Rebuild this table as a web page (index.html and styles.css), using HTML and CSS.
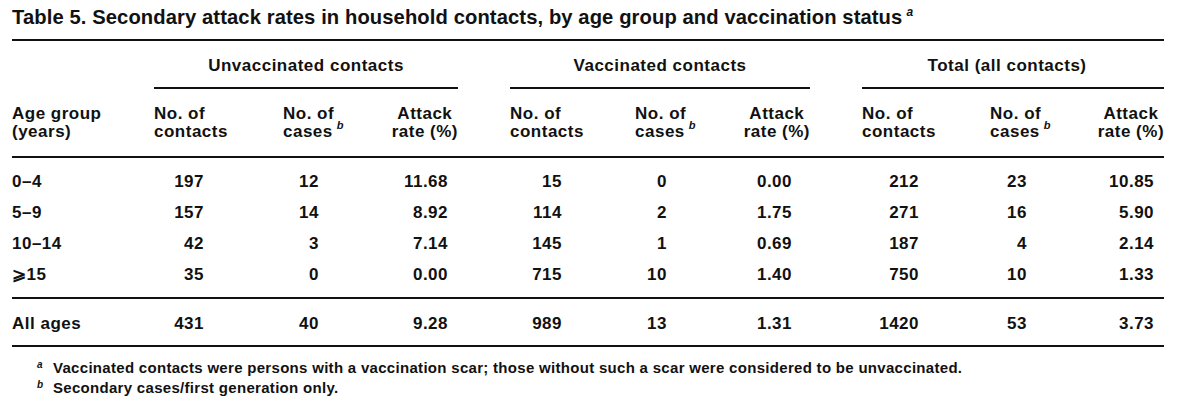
FILE: index.html
```html
<!DOCTYPE html>
<html lang="en">
<head>
<meta charset="utf-8">
<title>Table 5</title>
<link rel="stylesheet" href="styles.css">
</head>
<body>
<div class="page">
  <h1 class="title">Table 5. Secondary attack rates in household contacts, by age group and vaccination status<sup class="sup">a</sup></h1>
  <table class="tbl">
    <colgroup>
      <col class="w-age">
      <col class="w-c1"><col class="w-c2a"><col class="w-c3">
      <col class="w-gap">
      <col class="w-c1"><col class="w-c2b"><col class="w-c3">
      <col class="w-gap">
      <col class="w-c1"><col class="w-c2c"><col class="w-c3">
    </colgroup>
    <thead>
      <tr class="grp-row">
        <th></th>
        <th colspan="3" class="grp">Unvaccinated contacts</th>
        <th></th>
        <th colspan="3" class="grp">Vaccinated contacts</th>
        <th></th>
        <th colspan="3" class="grp grp-total">Total (all contacts)</th>
      </tr>
      <tr class="hdr-row">
        <th class="h-age">Age group<br>(years)</th>
        <th class="h-con">No. of<br>contacts</th>
        <th class="h-cas">No. of<br>cases<sup class="sup-s">b</sup></th>
        <th class="h-rate"><span class="stack">Attack<br>rate (%)</span></th>
        <th></th>
        <th class="h-con">No. of<br>contacts</th>
        <th class="h-cas">No. of<br>cases<sup class="sup-s">b</sup></th>
        <th class="h-rate"><span class="stack">Attack<br>rate (%)</span></th>
        <th></th>
        <th class="h-con">No. of<br>contacts</th>
        <th class="h-cas">No. of<br>cases<sup class="sup-s">b</sup></th>
        <th class="h-rate"><span class="stack">Attack<br>rate (%)</span></th>
      </tr>
    </thead>
    <tbody>
      <tr class="first">
        <td>0–4</td><td>197</td><td>12</td><td>11.68</td><td></td><td>15</td><td>0</td><td>0.00</td><td></td><td>212</td><td>23</td><td>10.85</td>
      </tr>
      <tr>
        <td>5–9</td><td>157</td><td>14</td><td>8.92</td><td></td><td>114</td><td>2</td><td>1.75</td><td></td><td>271</td><td>16</td><td>5.90</td>
      </tr>
      <tr>
        <td>10–14</td><td>42</td><td>3</td><td>7.14</td><td></td><td>145</td><td>1</td><td>0.69</td><td></td><td>187</td><td>4</td><td>2.14</td>
      </tr>
      <tr class="last">
        <td>⩾15</td><td>35</td><td>0</td><td>0.00</td><td></td><td>715</td><td>10</td><td>1.40</td><td></td><td>750</td><td>10</td><td>1.33</td>
      </tr>
    </tbody>
    <tfoot>
      <tr class="total">
        <td>All ages</td><td>431</td><td>40</td><td>9.28</td><td></td><td>989</td><td>13</td><td>1.31</td><td></td><td>1420</td><td>53</td><td>3.73</td>
      </tr>
    </tfoot>
  </table>
  <div class="notes">
    <p class="note"><sup class="mark">a</sup>Vaccinated contacts were persons with a vaccination scar; those without such a scar were considered to be unvaccinated.</p>
    <p class="note"><sup class="mark">b</sup>Secondary cases/first generation only.</p>
  </div>
</div>
</body>
</html>
```

FILE: styles.css
```css
html, body {
  margin: 0;
  padding: 0;
  background: #ffffff;
}

body {
  font-family: "Liberation Sans", Arial, sans-serif;
  color: #111111;
}

.page {
  width: 1152px;
  padding-left: 12px;
}

.title {
  margin: 0;
  padding-top: 5px;
  margin-bottom: 10px;
  font-size: 20.2px;
  line-height: 24px;
  font-weight: 700;
  letter-spacing: 0.1px;
}

.sup {
  font-size: 12px;
  font-style: italic;
  vertical-align: 8px;
  line-height: 0;
  margin-left: 4px;
}

.tbl {
  width: 1152px;
  table-layout: fixed;
  border-collapse: separate;
  border-spacing: 0;
  border-top: 2px solid #111111;
  font-size: 17px;
  font-weight: 700;
  letter-spacing: 0.5px;
}

.w-age { width: 142px; }
.w-c1 { width: 90px; }
.w-c2a { width: 132px; }
.w-c2b { width: 128px; }
.w-c2c { width: 130px; }
.w-c3 { width: 82px; }
.w-gap { width: 52px; }

.tbl th {
  font-weight: 700;
  padding: 0;
  line-height: 18px;
  vertical-align: top;
  white-space: nowrap;
}

.grp-row th {
  padding-top: 16px;
  padding-bottom: 12px;
}

.grp {
  text-align: center;
  border-bottom: 2px solid #111111;
}

.grp-row th.grp-total {
  padding-right: 12px;
}

.hdr-row th {
  padding-top: 16px;
  padding-bottom: 15px;
  border-bottom: 2px solid #111111;
  text-align: left;
}

.h-age { padding-left: 0; }
.h-con { padding-left: 2px; }
.hdr-row th:nth-child(3) { padding-left: 39px; }
.hdr-row th:nth-child(7) { padding-left: 35px; }
.hdr-row th:nth-child(11) { padding-left: 38px; }
.hdr-row th.h-rate { text-align: right; }

.stack {
  display: inline-block;
  text-align: center;
}

.sup-s {
  font-size: 11px;
  font-style: italic;
  vertical-align: 8px;
  line-height: 0;
  margin-left: 4px;
}

.tbl td {
  padding: 0;
  line-height: 31px;
  text-align: right;
  white-space: nowrap;
}

.tbl td:first-child { text-align: left; }

.tbl td:nth-child(2) { padding-right: 40px; }
.tbl td:nth-child(3) { padding-right: 57px; }
.tbl td:nth-child(4) { padding-right: 10px; }
.tbl td:nth-child(6) { padding-right: 38px; }
.tbl td:nth-child(7) { padding-right: 61px; }
.tbl td:nth-child(8) { padding-right: 18px; }
.tbl td:nth-child(10) { padding-right: 33px; }
.tbl td:nth-child(11) { padding-right: 55px; }
.tbl td:nth-child(12) { padding-right: 10px; }

.first td { padding-top: 8px; }
.last td {
  padding-bottom: 7px;
  border-bottom: 2px solid #111111;
}

.total td {
  padding-top: 9px;
  padding-bottom: 6px;
  border-bottom: 2px solid #111111;
}

.notes {
  margin-top: 11px;
  padding-left: 25px;
}

.note {
  margin: 0;
  font-size: 15px;
  line-height: 20px;
  font-weight: 700;
  letter-spacing: 0.3px;
}

.mark {
  display: inline-block;
  width: 16px;
  font-size: 10px;
  font-style: italic;
  vertical-align: 5px;
  line-height: 0;
}
```
